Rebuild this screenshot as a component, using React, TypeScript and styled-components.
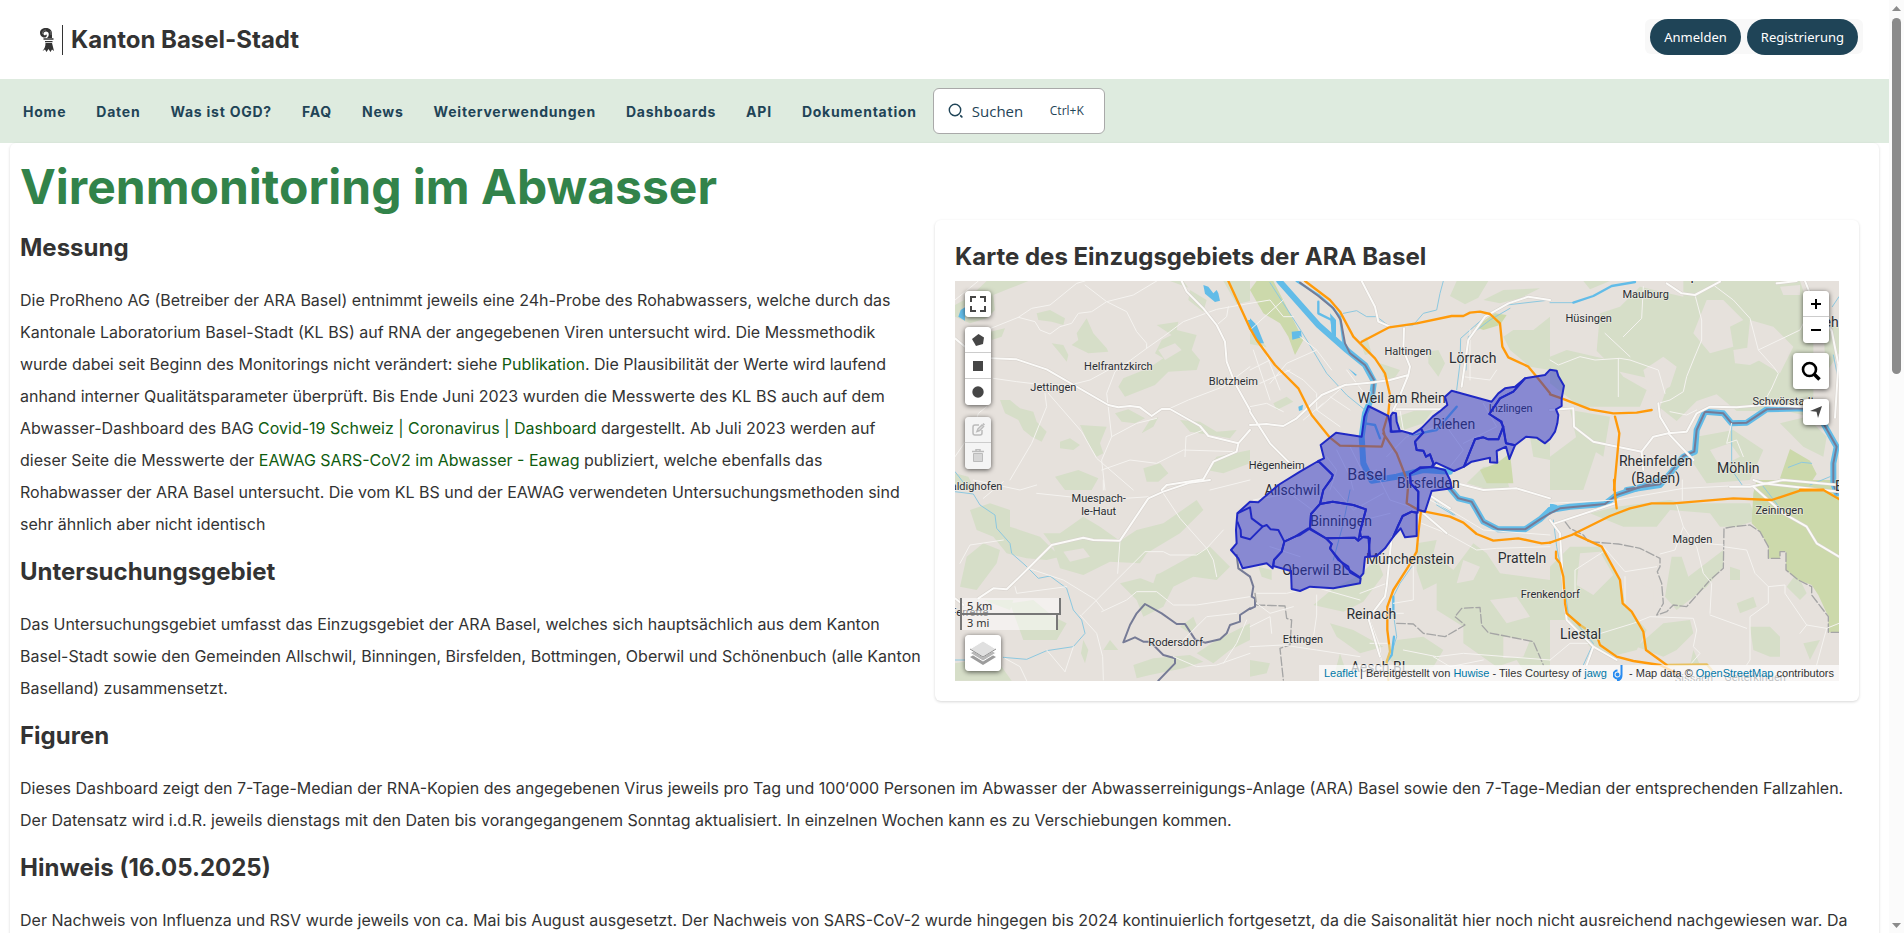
import React from "react";
import styled, { createGlobalStyle, css } from "styled-components";

const ink = "#333333";
const petrol = "#1f4457";

const GlobalStyle = createGlobalStyle`
  *, *::before, *::after { box-sizing: border-box; }
  html, body { margin: 0; background: #ffffff; }
  body { font-family: Inter, "Liberation Sans", sans-serif; font-size: 16px; color: ${ink}; }
`;

const Viewport = styled.div`
  display: grid;
  grid-template-columns: minmax(0, 1fr) 15px;
  height: 100vh;
  overflow: hidden;
`;
const Page = styled.div`
  min-width: 0;
  overflow: hidden;
`;

/* Scroll bar */
const ScrollTrack = styled.div`
  display: flex;
  flex-direction: column;
  align-items: center;
  background: #fbfbfb;
  padding: 6px 0 5px;
`;
const ScrollThumb = styled.div`
  width: 9px;
  height: 356px;
  margin: 7px 0 auto;
  border-radius: 5px;
  background: #8b8b8b;
`;

/* Header */
const Header = styled.header`
  display: flex;
  justify-content: space-between;
  align-items: flex-start;
  height: 79px;
  padding: 19px 26px 0 40px;
`;
const Brand = styled.a`
  display: flex;
  align-items: center;
  margin-top: 6px;
  color: ${ink};
  text-decoration: none;
  font-size: 24px;
  font-weight: 700;
  line-height: 30px;
`;
const BrandRule = styled.span`
  width: 1px;
  height: 30px;
  margin: 0 8px;
  background: ${ink};
`;
const Account = styled.div`
  display: flex;
  align-items: center;
  gap: 6px;
  height: 35px;
  padding: 0 5px;
  border-radius: 6px;
  background: #f8f8f8;
`;
const Pill = styled.button`
  height: 36px;
  padding: 0 14px;
  border: 0;
  border-radius: 18px;
  background: ${petrol};
  color: #ffffff;
  font: 400 13px/20px "Noto Sans", "Open Sans", sans-serif;
`;

const Nav = styled.nav`
  display: flex;
  align-items: center;
  gap: 16px;
  height: 64px;
  padding-left: 23px;
  background: #deebdf;
`;
const NavList = styled.ul`
  display: flex;
  gap: 30px;
  margin: 0;
  padding: 0;
  list-style: none;
`;
const NavLink = styled.a`
  color: ${petrol};
  text-decoration: none;
  font-size: 14px;
  font-weight: 700;
  line-height: 20px;
  letter-spacing: 0.055em;
  white-space: nowrap;
`;
const SearchButton = styled.button`
  display: flex;
  align-items: center;
  width: 172px;
  height: 46px;
  padding: 0 14px;
  border: 1px solid #a9a9a9;
  border-radius: 6px;
  background: #ffffff;
  color: ${petrol};
  font: 400 15px/24px "Open Sans", "Noto Sans", sans-serif;
`;
const SearchLabel = styled.span`
  margin-left: 8px;
`;
const Shortcut = styled.span`
  margin: 0 6px 0 auto;
  font-size: 12px;
`;

/* Content */
const Sheet = styled.main`
  margin: 0 10px;
  padding: 15px 20px 40px 10px;
  border-radius: 6px;
  background: #ffffff;
  box-shadow: 0 1px 3px rgba(0, 0, 0, 0.16);
`;
const Title = styled.h1`
  margin: 0;
  color: #32834a;
  font-size: 48px;
  font-weight: 700;
  line-height: 58px;
`;
const Columns = styled.div`
  display: grid;
  grid-template-columns: minmax(0, 905fr) minmax(0, 924fr);
  gap: 10px;
  align-items: start;
`;
const Heading = styled.h2`
  margin: 0;
  padding: 17px 0 21px;
  font-size: 24px;
  font-weight: 700;
  line-height: 30px;
`;
const Copy = styled.p`
  margin: 0;
  line-height: 32px;
`;
const TextLink = styled.a`
  color: #0f5c0f;
  text-decoration: none;
`;
const MapCard = styled.section`
  margin-top: 4px;
  padding: 20px;
  border-radius: 6px;
  background: #ffffff;
  box-shadow: 0 1px 3px rgba(0, 0, 0, 0.16);
`;
const MapTitle = styled.h2`
  margin: 0 0 8px;
  font-size: 24px;
  font-weight: 700;
  line-height: 33px;
`;

/* Map */
const MapFrame = styled.div`
  position: relative;
  height: 400px;
  overflow: hidden;
  background: #e6e1dc;
`;
const MapDrawing = styled.svg`
  display: block;
  width: 100%;
  height: 100%;
`;
const Corner = styled.div<{ $side: "left" | "right"; $edge: "top" | "bottom" }>`
  position: absolute;
  ${(p) => p.$side}: 10px;
  ${(p) => p.$edge}: 10px;
  display: flex;
  flex-direction: column;
  align-items: ${(p) => (p.$side === "left" ? "flex-start" : "flex-end")};
  gap: ${(p) => (p.$edge === "bottom" ? 5 : 10)}px;
`;
const Bar = styled.div<{ $spaced?: boolean }>`
  display: flex;
  flex-direction: column;
  overflow: hidden;
  border-radius: 4px;
  box-shadow: 0 1px 5px rgba(0, 0, 0, 0.65);
  ${(p) => p.$spaced && css`margin-bottom: 2px;`}
`;
const Tool = styled.button<{ $large?: boolean }>`
  display: flex;
  align-items: center;
  justify-content: center;
  width: ${(p) => (p.$large ? 36 : 26)}px;
  height: ${(p) => (p.$large ? 36 : 26)}px;
  padding: 0;
  border: 0;
  background: #ffffff;
  color: #464646;
  &:not(:last-child) { border-bottom: 1px solid #cccccc; }
  &:disabled { background: #f4f4f4; color: #bbbbbb; }
`;
const ScaleBar = styled.div`
  display: flex;
  flex-direction: column;
  align-items: flex-start;
  margin-left: -5px;
`;
const ScaleLine = styled.div<{ $imperial?: boolean }>`
  width: ${(p) => (p.$imperial ? 98 : 101)}px;
  height: ${(p) => (p.$imperial ? 15 : 17)}px;
  padding-left: 5px;
  border: 2px solid #777777;
  border-top-width: 0;
  border-bottom-width: ${(p) => (p.$imperial ? 0 : 2)}px;
  background: rgba(255, 255, 255, 0.5);
  font: 11px/16px "Noto Sans", sans-serif;
`;
const Attribution = styled.div`
  position: absolute;
  right: 0;
  bottom: 0;
  padding: 0 5px;
  background: rgba(255, 255, 255, 0.7);
  font: 11px/16px "Liberation Sans", sans-serif;
  white-space: nowrap;
  a { color: #0078a8; text-decoration: none; }
  svg { margin: 0 3px; vertical-align: top; }
`;

type Tile = "A" | "B" | "C" | "D" | "E" | "F";
type Shapes = Partial<Record<Tile, string>>;

/* The map is drawn in six tiles, three across and two down, at three units per pixel. */
const origin: Record<Tile, [number, number]> = {
  A: [-15, -33],
  B: [885, -33],
  C: [1785, -33],
  D: [-15, 597],
  E: [885, 597],
  F: [1785, 597],
};

const forest: Shapes = {
  A: "M110 33H235L180 55 130 75 135 120 110 145 60 160 15 140V105L60 80ZM260 130l40-10 45 25-5 20-35-10-40-5zM410 145l20 45 40 45 5 10-60 5-50-25 20-15-5-20zM305 220l35 5 15 30-5 20-20-25zM120 185l45-10-10 25-30 10zM620 165l65-10-5 25 60 15-15 45 25 30-10 30-85 5-40 40-90 35-20-30 15-25 75-30 45-30-25-15 20-40 30-15zM150 390l30 0 30 25 40 10 10 30 30 30-15 30-30-15-25-20-15-30-40-20zM390 465l80 5-20 50 10 30-20 10-25-40zM330 515l30-10 30 20-20 15-40-5zM495 430l40-12 50 27-30 15-40-5zM600 450l25-8-15 28-35 20zM690 450l60 5 50 30 60-5-20 25-120-20zM770 600l30-40 100-20v40l-80 30zM580 595l50-15 25 30-30 25-35 0zM315 620l70-20 60 25-20 35h-80zM15 610l40 10 20 40h-60zM720 60l50 30-10 35-45-35zM820 33h80v60l-40 10zM660 33h40l15 20z",
  B: "M620 33h95l-30 50-40 20-45-25zM700 90l60-30 110-5-60 30-60 15zM790 180l60 0 50-40v160l-60-10-60-50-20-40zM535 245l30-5 20 40-20 40-30-40zM330 215l20-15 15 50-20 5zM390 280l60 20-20 30-30-10zM440 440l60-20 50 0-30 40-60 20-20-20zM840 500l60 20v50l-50-10zM0 190l30 12 20 30-50-10zM70 400l40-20 20 15-50 25zM650 640l50-50 60 0 20 70h-60z",
  C: "M150 130l60-20 60-60 130 30 0-47h350l20 60 20 100v250l-80-20-150 0-60-50-60 20-60 60-50-40 20-60-60-30-90-20-60-60zM0 260l50-20 130 30 40 50 70 40-20 50-180 0-90-70zM60 420l120 20-20 120-80-50zM0 560l80-60 60 40-40 120H0zM100 33h80l-60 25zM440 500l110-20 90 60-40 90-130 10-40-60zM690 460l80-20 60 60-10 60-60-30zM820 160l47 10v80l-40 60z",
  D: "M60 90l60-20 60 20 0 50 90 30 60 60-40 10-60-5-60-15-40-50-50-20zM310 200L280 160 330 160 400 110 450 140 510 183 560 150 640 130 740 60 760 90 690 160 590 220 570 250 480 245 400 285 330 265zM510 310l120-30 90-50 60-30 60 60-40 40-70-10-60 30-30 60-60 30-20-50zM50 230l50-40 50 20-10 40-60 80-50-10zM15 550l60-10 80 20 30 42H15zM180 370l70-10 60 50 40 20-30 50-100 0zM400 480l15 30-10 40-12-30zM550 555l60-20 110-10 40 20-60 20-100 20-40 10zM740 520l60-40 100-50v50l-60 30-50 40zM460 510l20-30 25 30zM690 440l40-30 10 25-20 25zM100 360l90 0-10 30z",
  E: "M500 190l60-10-10 40 60 50 60-80 40 30 40 60 150 20v300h-60l-40-60-60 20-100-70 0-50-80-50 0-80-40 20-20-60zM380 235l20 50-60 80-60 30-90-20 60-50 80-40zM25 260l40 10 0 30-30-10zM240 430l70 20 90 50-70 20-70-50zM270 520l20 60-40 15zM440 480l80-10 60 40-30 50-80 20-50-40zM0 540l60 10-10 30-50 10z",
  F: "M0 260l60-60 90 0 60 100 20 80 60 70-30 60-80 20-60-30-60-80-60 0zM200 80l160-20 40 10 200 0 20 50-60 20-50 0-30-40-120-10-40 50-100 0-100-40zM345 350l20-120 30 0 20 60 105-80 0 50-50 60-90 70zM340 430l80-10 10 40-50 50-40 20-80-30zM600 440l60 0 30 30 0 60-30 0-50-20zM740 280l30 60-20 20-40-40zM540 260l30 10 0 30-30 0zM760 490l50-10-30 60zM430 510l20 45-30 0zM560 370l50-20 10 30-50 20z",
};
const clearings: Shapes = {
  A: "M625 240l50-20 20 20-50 30zM40 110l30-10 10 20-30 10z",
  C: "M470 90l50 0 60 60-40 20 10 60-70 20-50-60zM600 150l70 20 60 60-40 80-100-60zM280 300l60-40 40 30-20 60-60 30zM550 240l60-10 40 30-50 25-45-5zM690 50l60-5 0 30-50 0zM480 540l60-20 30 40-60 30z",
  D: "M340 215l60-10 20 25-60 15zM560 290l60-10-10 30z",
  E: "M640 240l50 20-20 40-50 10zM720 360l80-10 40 60-70 20zM760 470l80 10-20 50-60 5z",
  F: "M90 220l60-5 40 70-60 60-50-30zM270 310l40 20 0 60-50 0z",
};
const park: Shapes = {
  B: "M0 60L20 33H70L130 150 160 210 135 255 115 200 90 160 40 130 20 95zM675 170l60-40 35 5-20 30-50 15zM690 600l50-20 40-30 10 90-80 0z",
  C: "M690 625l30-88 60 35 20 40-20 30zM610 660l70-30 100-5 60 35z",
  F: "M610 40L620 0H867V457H835V410L805 345 785 315 745 300 708 270V215H690V235H655V200L630 155 605 130z",
};
const lakes: Shapes = {
  A: "M760 45l15 5 15 20 10-10 5 10 5 22-15 4-30-25zM45 112v40l-20-12 7-20zM893 150h7v20z",
  B: "M0 145l20 20 22 55-14 0-28-40zM125 185l28-3 2 20-28 7zM145 410l14-6-2 16-10 3zM295 295l26 20-5 2zM240 130l18 20 0 50-12 0z",
  F: "M0 70l20 5 15 15-35 12z",
};
const rhine: Shapes = {
  B: "M88 33L130 80 205 165 290 240 345 285 372 335 365 385 345 430 335 500 340 580 365 632 440 620 520 600 600 605",
  E: "M600 25L625 55 665 65 700 125 745 148 825 148 870 118 900 90",
  F: "M0 90L60 80 165 72 200 45 260 25 330 0",
  C: "M230 660L330 645 365 605 400 560 435 545 440 480 465 425 520 430 545 460 590 458 650 418 760 415 820 460 860 530 850 580 850 640 860 670",
};
const oldRhine: Shapes = {
  B: "M140 33L205 75 245 110 270 140 280 215 300 245M205 95L205 130 245 150 250 200 280 225M480 495L560 480 620 410M345 460L375 465 390 505",
  C: "M70 98L130 78 185 48 255 36",
  E: "M430 350L430 400M432 470L425 525 412 543",
};
const streams: Shapes = {
  A: "M15 605L50 650",
  B: "M60 38L100 100 155 185 230 310 290 375 345 420M280 130L320 122 350 140 380 140 420 170 490 165 520 130 560 120 570 70 580 33M620 360L630 280 632 205 700 145 770 105 900 90M648 300L655 200 720 150 780 115",
  C: "M0 98H70M545 460L545 600 580 650M867 80l-20 30M850 255L865 330M715 592l40-15 30 3M780 645l60-25",
  D: "M15 35L70 42 90 75 135 105 140 145 180 190 185 220 225 255 265 295 300 288 350 325 370 390 395 420 405 460 370 500 290 512 230 538 160 532M15 540h30",
  E: "M555 65l30 20 30 20M560 75l50 30M485 260L450 310 430 350M430 400L440 470 425 520M300 30L280 130 250 240",
  F: "M10 120L20 200 40 300 55 400 130 490 100 555M625 0L710 110",
};
const minorRoads: Shapes = {
  A: "M15 90L85 33M110 180L205 142 245 115 300 105 380 40 405 33M205 142L255 155 270 180 300 192 330 170 365 160 385 130 425 125 470 95 550 75 620 33M405 45L470 95 530 125 560 185 590 220 590 235 495 305 470 370 485 500 455 570 465 660M590 235L640 200 700 155 800 118 900 100M285 370L290 410 245 520 180 630M295 370L395 485 440 565 550 660M485 500L560 460 620 445M130 325L200 335 285 345 360 345 420 330 475 300M660 415L715 390 820 350 900 290M455 600L540 570 620 580 700 540 860 545M705 560L708 500 760 480M800 165l30-25 5-30M15 560L70 480 85 430 110 410",
  B: "M0 100L60 90 100 140 130 140M110 300L160 330 200 370 200 420 270 470M200 240L245 300M150 200L200 240 110 280 60 340M290 300l60 80M0 300l60-30M640 320L720 330 740 300M660 180v150M450 420l10 60 40 10M10 240L60 390M40 230L90 360M30 340L120 300M200 420L290 340M240 380L300 420M160 450L220 400M0 180L100 90M260 540L300 620 310 660M300 530L340 610 380 600M230 560L260 600 240 660M410 560L470 500 560 470M590 470L640 540 600 590M700 400L740 470 640 520M0 410L50 400 100 425",
  C: "M435 75L455 150 455 210 430 270 410 320 400 365 360 390 325 400M490 45L550 90 600 145 625 240 670 290 685 310 665 355M625 240L750 180 770 140M0 270L25 285 90 260 135 270 210 265 240 270 325 300 345 370M205 265V380M165 190L240 260M280 50L275 145 220 200M545 460L530 520 560 510 580 560M270 545L200 530M360 425L410 435 440 420M665 355L640 400",
  D: "M70 0L210 30 260 15M100 55l60-50M160 180L60 195 30 250M235 265L340 300 435 358 460 390M195 320l5 20 150-20M510 182L503 280M395 405L585 215 640 215 660 225 740 225 770 205 690 115 640 40M770 205L790 240 800 290M455 395L530 360 560 335 620 335 670 375 740 375 900 350M390 405L440 460 458 530 460 600M370 500L345 575M165 535L210 560 230 602M820 550l40-60 30-70M670 530L740 560 800 555 900 520M690 490L770 410 860 400M770 205L820 150M260 40L450 60 600 50M460 0V30M780 30L900 0M290 510L345 575",
  E: "M0 440L60 410 65 460M20 340h90l80-20M200 345v60l-10 70M0 500L100 495 200 510 330 530M360 420L390 500 395 555M330 340l80-30 10-120M430 370L490 360V260M460 510L560 530 640 520 900 540M515 130L590 160 680 210 740 205 900 200M540 60L600 90 700 150 900 165M20 370L60 400 130 380M360 490h60M190 320L330 360M380 400h80M550 530L600 560 700 540M10 60L120 40 200 100M60 200L150 230M250 20L310 90 400 40M390 0L420 60 480 80M340 120L420 100",
  F: "M0 70L200 60 400 25 600 15M380 75L400 140 375 210 330 222M400 140L440 200 460 280 485 310 480 400M520 200L590 210 615 280 655 320 655 370 600 410 600 540 590 555M75 350V270L160 215M225 290L225 380M160 200L225 275 320 260M120 470L250 430 300 410 430 415 440 450 430 500 450 520 420 555M480 405L590 445M655 320L705 315 705 340 770 435 830 445 867 430M0 540L60 490 120 490M750 460L770 435M830 445L800 555M460 190L520 195M397 0V60",
};
const majorRoads: Shapes = {
  A: "M125 265L200 268 290 298 475 405 505 412 540 408 570 412 605 438 635 417 660 417 750 468 775 498 865 520 900 480M15 205L45 230M695 33L710 65 760 115 800 165 825 215 830 275 855 340 900 420M865 520L860 545 790 575 760 628 650 645 635 660",
  B: "M335 33L375 110 385 155 420 170M0 465L50 462 100 468 140 445 215 375 285 345 360 338 420 330 475 315 480 290 460 240 462 175M475 315L440 400 430 420M440 418L580 418M635 350l20-140 50-70 70-40 60-20 65 10M0 425L25 465 60 520 120 580",
  C: "M350 40L395 70 435 75 510 35M360 490L330 440 325 400M0 420L70 415 72 470 130 515 275 545 310 500 355 490 410 485 440 430 480 410 560 412 640 405 770 410M765 33l20 50 60 100 20 100-10 160M355 490L430 570M540 650L600 650 700 630 867 645M275 545L280 600M680 40L740 33",
  D: "M85 355L130 325 170 328 235 265 305 195 400 173 430 180 510 182 595 55 640 35 720 8 780 0M15 355L40 375",
  E: "M425 170L410 320 405 350 355 415 390 530M620 10L700 30 800 25 900 55M520 100L590 160M545 50L600 85",
  F: "M0 120L30 160 40 330 50 420 130 500 200 540M15 130L195 70M610 0L640 10 867 35M610 20L700 100 770 140 800 190 867 230M130 500L110 555",
};
const motorways: Shapes = {
  A: "M835 33L900 175",
  B: "M0 175L20 210 75 285 145 355 185 435 240 503 270 527 395 530 405 500 400 480 415 430 420 375 405 310 375 265 310 200 270 125 240 90 165 33M335 215L418 172 500 160 605 138 640 138 660 128 690 125 720 132 750 160 757 230 775 262 835 290 860 320 900 370M400 490L440 550 475 640",
  C: "M0 373L35 385 120 418 190 430 260 428 305 420M195 440L208 490 192 660M750 659h70",
  E: "M475 10L470 70 510 92 600 110 640 128 680 162 730 182 805 175 875 190 900 188M513 92L505 160 500 215 475 260 430 330 412 380 412 450 417 490",
  F: "M0 188L65 165 180 108 240 85 305 70 370 70 550 55 665 60 750 32 820 30 867 57M192 0L195 45 200 85M75 163L155 200 210 300 218 370 245 395 280 455 288 510 350 555M18 215v20L30 250 40 290 45 370 50 400 90 435M145 480L150 495 200 530 250 543 330 555L380 580",
};
const trunkRoads: Shapes = {
  E: "M417 490L420 515 410 545 415 600",
  F: "M90 435L105 445M350 555L470 553 485 570",
};
const nationalBorder: Shapes = {
  B: "M150 38L205 78 250 115 272 150 285 220 300 250 345 285 372 330 370 370",
  C: "M230 658L330 643 365 603 400 558 433 545 440 480 465 425 520 430 545 460 590 458 650 418 760 415 820 460 860 530 850 580 850 640 860 670",
  D: "M860 225L865 265 900 290M900 385L870 405 870 425 840 435 830 460 810 478 765 488 735 478 705 432 680 432 635 400 585 372 560 400 540 435 520 487 555 472 580 485 600 485 640 525 675 535 675 550 625 602",
  E: "M0 290L10 320 5 350 15 355 15 380 0 387M600 25L625 55 665 65 700 125 745 148 825 148 870 118 900 100",
  F: "M0 100L30 85 165 72 200 45 260 25 330 0",
};
const cantonBorder: Shapes = {
  E: "M15 340L20 375 105 378 110 415 125 420 120 495 90 505 100 600M440 430L490 432 520 460 585 470 645 435 615 410 635 385 690 382 695 435 715 458 850 485 880 555",
  F: "M45 125L60 145 100 165 115 185 205 192 270 205 330 235 330 260 322 275 335 310 340 370 320 405 350 395 370 375 410 380 480 300 520 265 522 145 550 140 600 135 630 155 655 200 655 235 690 235 690 215 708 215 708 270 745 300 785 320 785 345 835 410 835 457 867 457",
};

/* Municipalities of the catchment area, in the coordinates of tile B. */
const catchment = [
  "M355 408L415 438 425 485 455 483 488 492 513 476 520 488 495 515 500 540 520 542 528 560 540 553 550 580 546 592 510 592 480 612 482 640 505 665 503 728 485 725 458 738 445 765 430 800 405 835 380 858 355 860 360 805 333 800 330 785 348 718 310 705 248 695 210 702 220 660 245 625 248 615 205 573 222 565 212 525 258 488 335 500 343 440Z",
  "M422 438L428 428 438 430 440 455 450 484 422 485Z",
  "M605 362L725 395 745 370 765 355 795 350 825 325 790 365 750 385 718 432 752 455 760 470 745 508 715 508 700 502 675 508 660 545 642 590 612 603 558 578 546 592 550 580 540 553 528 560 520 542 500 540 495 515 520 488 513 476 548 440 568 425 592 405 585 380Z",
  "M825 325L885 315 900 299 920 302 925 318 942 347 935 385 935 408 918 418 925 435 922 460 915 485 900 507 885 520 860 503 828 500 795 526 768 520 762 488 755 455 718 432 750 385 790 365Z",
  "M760 470L768 520 795 526 778 567 768 530 740 543 742 578 720 577 720 563 665 575 642 590 660 545 675 508 700 502 715 508 745 508Z",
  "M480 612L510 595 545 590 585 600 600 630 605 655 545 663 525 725 505 720 505 665 482 640Z",
  "M205 573L248 615 245 625 220 660 210 702 183 732 180 775 150 795 135 800 103 815 95 845 72 870 68 895 50 880 0 890 -22 895 -35 865 -57 840 -40 820 -42 780 -38 730 0 695 25 697 85 645 150 605Z",
  "M-38 755L-28 780 -27 800 0 808 38 770 50 765 62 778 85 780 103 815",
  "M-38 730L0 712 5 745 38 770",
  "M183 732L210 702 248 695 310 705 348 718 330 785 325 812 315 803 228 805 180 775Z",
  "M228 805L315 803 325 812 340 800 355 800 360 858 345 862 340 910 330 922 290 895 240 835 245 822Z",
  "M135 800L175 775 228 805 245 822 240 835 265 870 295 890 300 907 332 925 330 940 250 955 180 950 150 963 125 957 123 903 70 888 72 870 95 845 103 815Z",
  "M430 800L458 738 485 725 500 728 500 798 465 802 452 775Z",
];

type LabelSpec = [Tile, number, number, string, number];
const places: LabelSpec[] = [
  ["A", 505, 288, "Helfrantzkirch", 33],
  ["A", 310, 352, "Jettingen", 33],
  ["A", 850, 333, "Blotzheim", 33],
  ["B", 474, 244, "Haltingen", 33],
  ["B", 668, 264, "Lörrach", 42],
  ["B", 455, 386, "Weil am Rhein", 42],
  ["B", 612, 462, "Riehen", 42],
  ["B", 782, 416, "Inzlingen", 33],
  ["B", 80, 586, "Hégenheim", 33],
  ["B", 351, 613, "Basel", 48],
  ["B", 535, 639, "Birsfelden", 42],
  ["C", 287, 74, "Maulburg", 33],
  ["C", 116, 145, "Hüsingen", 33],
  ["C", 440, 17, "Schopfheim", 42],
  ["C", 700, 393, "Schwörstadt", 33],
  ["C", 317, 573, "Rheinfelden", 42],
  ["C", 317, 624, "(Baden)", 42],
  ["C", 565, 596, "Möhlin", 42],
  ["C", 832, 158, "Wehr", 42],
  ["D", 65, 18, "Waldighofen", 33],
  ["D", 446, 56, "Muespach-", 33],
  ["D", 446, 95, "le-Haut", 33],
  ["D", 677, 486, "Rodersdorf", 33],
  ["D", 58, 396, "Ferrette", 33],
  ["E", 127, 30, "Allschwil", 42],
  ["E", 273, 123, "Binningen", 42],
  ["E", 197, 271, "Oberwil BL", 42],
  ["E", 480, 238, "Münchenstein", 42],
  ["E", 816, 236, "Pratteln", 42],
  ["E", 364, 402, "Reinach", 42],
  ["E", 159, 479, "Ettingen", 33],
  ["E", 901, 342, "Frenkendorf", 33],
  ["E", 390, 562, "Aesch BL", 42],
  ["F", 427, 177, "Magden", 33],
  ["F", 688, 92, "Zeiningen", 33],
  ["F", 92, 464, "Liestal", 42],
  ["F", 432, 595, "Sissach", 33],
  ["F", 615, 593, "Gelterkinden", 33],
  ["F", 905, 18, "Eiken", 42],
];

const PlaceName = styled.text`
  font-family: Roboto, "Noto Sans", sans-serif;
  fill: #2b2e33;
  stroke: rgba(240, 237, 232, 0.7);
  stroke-width: 5px;
  stroke-linejoin: round;
  paint-order: stroke;
  text-anchor: middle;
`;

const Layer = ({ shapes, ...rest }: { shapes: Shapes } & Omit<React.SVGProps<SVGGElement>, "ref">) => (
  <g fill="none" strokeLinejoin="round" strokeLinecap="round" {...rest}>
    {(Object.keys(shapes) as Tile[]).map((tile) => (
      <path key={tile} d={shapes[tile]} transform={`translate(${origin[tile].join(" ")})`} />
    ))}
  </g>
);

const CatchmentMap = () => (
  <MapDrawing viewBox="0 0 2652 1200" preserveAspectRatio="xMidYMid slice" role="img" aria-label="Einzugsgebiet der ARA Basel">
    <Layer shapes={forest} fill="#d6dec8" />
    <Layer shapes={clearings} fill="#e6e1dc" />
    <Layer shapes={park} fill="#ccd9ab" />
    <Layer shapes={lakes} fill="#62bce8" />
    <Layer shapes={streams} stroke="#8cc8e0" strokeWidth={3} />
    <Layer shapes={oldRhine} stroke="#62bce8" strokeWidth={7} />
    <Layer shapes={rhine} stroke="#62bce8" strokeWidth={18} />
    <Layer shapes={nationalBorder} stroke="#767b96" strokeWidth={6} />
    <Layer shapes={cantonBorder} stroke="#a5a5a5" strokeWidth={4} strokeDasharray="26 8" />
    <Layer shapes={minorRoads} stroke="#f5f3f0" strokeWidth={3} />
    <Layer shapes={majorRoads} stroke="#d6d1cc" strokeWidth={9} />
    <Layer shapes={majorRoads} stroke="#fbfaf8" strokeWidth={6} />
    <Layer shapes={trunkRoads} stroke="#e8c060" strokeWidth={7} />
    <Layer shapes={motorways} stroke="#ff9a0a" strokeWidth={7} />
    {places.map(([tile, x, y, name, size]) => (
      <PlaceName key={name} x={origin[tile][0] + x} y={origin[tile][1] + y + size / 3} fontSize={size}>
        {name}
      </PlaceName>
    ))}
    <g transform="translate(885 -33)" stroke="#2029c4" strokeWidth={6} strokeLinejoin="round" fill="#2a32c8" fillOpacity={0.5}>
      {catchment.map((d) => (
        <path key={d} d={d} fill={d.endsWith("Z") ? undefined : "none"} />
      ))}
    </g>
  </MapDrawing>
);

const Crosier = () => (
  <svg width="14" height="24" viewBox="0 0 28 48" fill={ink} aria-hidden="true">
    <path d="M9 19C3 19 0 14 0 9.500 0 4 5 0 12 0c8 0 12 5 12 12v8H14c2-2 3.500-4 3.500-7.500C17.500 9 15 7 12 7 9 7 7 9 7 11.500c0 2 1.500 3 3 3 1 0 2-1 2-2 3.500 2 1 6.500-3 6.500z" />
    <path d="M7 20.500h20v3H7zM10 26h15v2.500H10zM11 30h13l4 16-4-3-3 5-4-6-4 6-3-5-5 3c4-5 6-9 6-16z" />
    <path d="M5 12C4 7 8 4 12 4M20 6c2 2 2 5 2 8" fill="none" stroke="#aaaaaa" />
  </svg>
);

const App = () => (
  <>
    <GlobalStyle />
    <Viewport>
      <Page>
        <Header>
          <Brand href="#home">
            <Crosier />
            <BrandRule />
            Kanton Basel-Stadt
          </Brand>
          <Account>
            <Pill>Anmelden</Pill>
            <Pill>Registrierung</Pill>
          </Account>
        </Header>
        <Nav>
          <NavList>
            {["Home", "Daten", "Was ist OGD?", "FAQ", "News", "Weiterverwendungen", "Dashboards", "API", "Dokumentation"].map((item) => (
              <li key={item}>
                <NavLink href="#nav">{item}</NavLink>
              </li>
            ))}
          </NavList>
          <SearchButton>
            <svg width="16" height="16" viewBox="0 0 16 16" fill="none" stroke={petrol} strokeWidth="1.4" strokeLinecap="round" aria-hidden="true">
              <circle cx="7" cy="7" r="5.7" />
              <path d="M12.800 12.800l1 1" strokeWidth="1.8" />
            </svg>
            <SearchLabel>Suchen</SearchLabel>
            <Shortcut>Ctrl+K</Shortcut>
          </SearchButton>
        </Nav>
        <Sheet>
          <Title>Virenmonitoring im Abwasser</Title>
          <Columns>
            <section>
              <Heading>Messung</Heading>
              <Copy>
                Die ProRheno AG (Betreiber der ARA Basel) entnimmt jeweils eine 24h-Probe des Rohabwassers, welche durch das
                Kantonale Laboratorium Basel-Stadt (KL BS) auf RNA der angegebenen Viren untersucht wird. Die Messmethodik wurde
                dabei seit Beginn des Monitorings nicht verändert: siehe <TextLink href="#publikation">Publikation</TextLink>. Die
                Plausibilität der Werte wird laufend anhand interner Qualitätsparameter überprüft. Bis Ende Juni 2023 wurden die
                Messwerte des KL BS auch auf dem Abwasser-Dashboard des BAG{" "}
                <TextLink href="#bag">Covid-19 Schweiz | Coronavirus | Dashboard</TextLink> dargestellt. Ab Juli 2023 werden auf
                dieser Seite die Messwerte der <TextLink href="#eawag">EAWAG SARS-CoV2 im Abwasser - Eawag</TextLink> publiziert,
                welche ebenfalls das Rohabwasser der ARA Basel untersucht. Die vom KL BS und der EAWAG verwendeten
                Untersuchungsmethoden sind sehr ähnlich aber nicht identisch
              </Copy>
              <Heading>Untersuchungsgebiet</Heading>
              <Copy>
                Das Untersuchungsgebiet umfasst das Einzugsgebiet der ARA Basel, welches sich hauptsächlich aus dem Kanton
                Basel-Stadt sowie den Gemeinden Allschwil, Binningen, Birsfelden, Bottmingen, Oberwil und Schönenbuch (alle Kanton
                Baselland) zusammensetzt.
              </Copy>
            </section>
            <MapCard>
              <MapTitle>Karte des Einzugsgebiets der ARA Basel</MapTitle>
              <MapFrame>
                <CatchmentMap />
                <Corner $side="left" $edge="top">
                  <Bar>
                    <Tool aria-label="Vollbild">
                      <svg width="16" height="16" viewBox="0 0 16 16" fill="none" stroke="currentColor" strokeWidth="2" aria-hidden="true">
                        <path d="M1 6V1h5M10 1h5v5M15 10v5h-5M6 15H1v-5" />
                      </svg>
                    </Tool>
                  </Bar>
                  <Bar $spaced>
                    <Tool aria-label="Polygon zeichnen">
                      <svg width="12" height="12" viewBox="0 0 12 12" fill="currentColor" aria-hidden="true">
                        <path d="M6.500 0L12 3.500l-1 6.500-7 2L0 5z" />
                      </svg>
                    </Tool>
                    <Tool aria-label="Rechteck zeichnen">
                      <svg width="10" height="10" viewBox="0 0 10 10" fill="currentColor" aria-hidden="true">
                        <path d="M0 0h10v10H0z" />
                      </svg>
                    </Tool>
                    <Tool aria-label="Kreis zeichnen">
                      <svg width="12" height="12" viewBox="0 0 12 12" fill="currentColor" aria-hidden="true">
                        <circle cx="6" cy="6" r="5.7" />
                      </svg>
                    </Tool>
                  </Bar>
                  <Bar>
                    <Tool disabled aria-label="Bearbeiten">
                      <svg width="13" height="13" viewBox="0 0 13 13" fill="none" stroke="currentColor" strokeWidth="1.5" aria-hidden="true">
                        <path d="M7 2H3Q1 2 1 4v6q0 2 2 2h5q2 0 2-2V7M5 8.500l1-2.500 4-4 1.500 1.500-4 4zM11 0.500l1.500 1.500" />
                      </svg>
                    </Tool>
                    <Tool disabled aria-label="Löschen">
                      <svg width="12" height="14" viewBox="0 0 12 14" fill="none" stroke="currentColor" aria-hidden="true">
                        <path d="M1.500 4.500h9v8h-9z" fill="#d6d6d6" />
                        <path d="M0 2.500h12M4 2V.5h4V2" strokeWidth="1.500" />
                      </svg>
                    </Tool>
                  </Bar>
                </Corner>
                <Corner $side="right" $edge="top">
                  <Bar>
                    <Tool aria-label="Vergrössern">
                      <svg width="10" height="10" viewBox="0 0 10 10" stroke="#000" strokeWidth="2" aria-hidden="true">
                        <path d="M0 5h10M5 0v10" />
                      </svg>
                    </Tool>
                    <Tool aria-label="Verkleinern">
                      <svg width="10" height="10" viewBox="0 0 10 10" stroke="#000" strokeWidth="2" aria-hidden="true">
                        <path d="M0 5h10" />
                      </svg>
                    </Tool>
                  </Bar>
                  <Bar>
                    <Tool $large aria-label="Ort suchen">
                      <svg width="20" height="20" viewBox="0 0 20 20" fill="none" stroke="#000" aria-hidden="true">
                        <circle cx="8.500" cy="8.500" r="6.500" strokeWidth="2.600" />
                        <path d="M13 13l5.500 5.500" strokeWidth="3.600" />
                      </svg>
                    </Tool>
                  </Bar>
                  <Bar>
                    <Tool aria-label="Standort">
                      <svg width="12" height="12" viewBox="0 0 12 12" fill="currentColor" aria-hidden="true">
                        <path d="M12 0L8 12 6.500 5.800 0 5z" />
                      </svg>
                    </Tool>
                  </Bar>
                </Corner>
                <Corner $side="left" $edge="bottom">
                  <ScaleBar>
                    <ScaleLine>5 km</ScaleLine>
                    <ScaleLine $imperial>3 mi</ScaleLine>
                  </ScaleBar>
                  <Bar>
                    <Tool $large aria-label="Ebenen">
                      <svg width="26" height="26" viewBox="0 0 26 26" aria-hidden="true">
                        <path d="M0 17l13-7 13 7-13 8z" fill="#9c9c9c" />
                        <path d="M0 13l13-7 13 7-13 8z" fill="#b8b8b8" stroke="#fff" />
                        <path d="M0 9l13-8 13 8-13 8z" fill="#e0e0e0" stroke="#fff" />
                        <path d="M0 9l13 8 13-8" fill="none" stroke="#8e8e8e" />
                      </svg>
                    </Tool>
                  </Bar>
                </Corner>
                <Attribution>
                  <a href="#leaflet">Leaflet</a> | Bereitgestellt von <a href="#huwise">Huwise</a> - Tiles Courtesy of{" "}
                  <a href="#jawg">jawg</a>{" "}
                  <svg width="10" height="16" viewBox="0 0 10 16" fill="none" stroke="#2a8cf0" strokeWidth="2" aria-hidden="true">
                    <path d="M8.500 0v10a4 4 0 1 1-4-4.500M4 15.500Q8.500 15 8.500 10" />
                    <circle cx="4.500" cy="9.500" r="1" />
                  </svg>{" "}
                  - Map data © <a href="#osm">OpenStreetMap</a> contributors
                </Attribution>
              </MapFrame>
            </MapCard>
          </Columns>
          <Heading>Figuren</Heading>
          <Copy>
            Dieses Dashboard zeigt den 7-Tage-Median der RNA-Kopien des angegebenen Virus jeweils pro Tag und 100‘000 Personen im
            Abwasser der Abwasserreinigungs-Anlage (ARA) Basel sowie den 7-Tage-Median der entsprechenden Fallzahlen. Der Datensatz
            wird i.d.R. jeweils dienstags mit den Daten bis vorangegangenem Sonntag aktualisiert. In einzelnen Wochen kann es zu
            Verschiebungen kommen.
          </Copy>
          <Heading>Hinweis (16.05.2025)</Heading>
          <Copy>
            Der Nachweis von Influenza und RSV wurde jeweils von ca. Mai bis August ausgesetzt. Der Nachweis von SARS-CoV-2 wurde
            hingegen bis 2024 kontinuierlich fortgesetzt, da die Saisonalität hier noch nicht ausreichend nachgewiesen war. Da
          </Copy>
        </Sheet>
      </Page>
      <ScrollTrack aria-hidden="true">
        <svg width="9" height="5" viewBox="0 0 9 5" fill="#8b8b8b">
          <path d="M4.500 0L9 5H0z" />
        </svg>
        <ScrollThumb />
        <svg width="9" height="5" viewBox="0 0 9 5" fill="#8b8b8b">
          <path d="M0 0h9L4.500 5z" />
        </svg>
      </ScrollTrack>
    </Viewport>
  </>
);

export default App;
